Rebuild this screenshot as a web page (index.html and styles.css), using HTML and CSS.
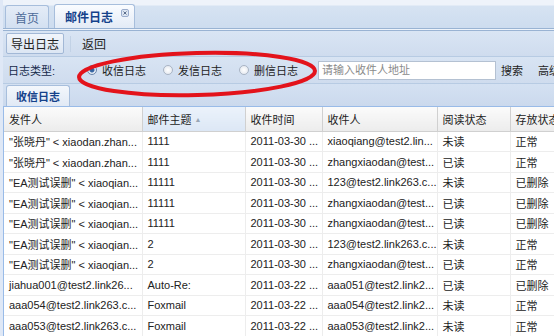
FILE: index.html
```html
<!DOCTYPE html>
<html lang="zh-CN">
<head>
  <meta charset="UTF-8">
  <title>邮件日志</title>
  <link rel="stylesheet" href="styles.css">
</head>
<body>
  <div class="page">
    <!-- Main tabs -->
    <div class="tabbar">
      <div class="tab">首页</div>
      <div class="tab active">邮件日志
        <span class="tab-close">
          <svg width="8" height="8" viewBox="0 0 8 8"><rect x="0.5" y="0.5" width="7" height="7" rx="1.5" fill="#dde6f2" stroke="#9aaccc"/><path d="M2.5 2.5l3 3M5.5 2.5l-3 3" stroke="#5d6f8c" stroke-width="1"/></svg>
        </span>
      </div>
    </div>

    <!-- Toolbar -->
    <div class="toolbar">
      <button class="tool-btn pressed">导出日志</button>
      <span class="tool-sep"></span>
      <button class="tool-btn">返回</button>
    </div>

    <!-- Filter row -->
    <div class="filter">
      <span class="filter-label">日志类型:</span>
      <label class="radio checked"><span class="radio-dot"></span>收信日志</label>
      <label class="radio"><span class="radio-dot"></span>发信日志</label>
      <label class="radio"><span class="radio-dot"></span>删信日志</label>
      <input class="search-input" type="text" placeholder="请输入收件人地址">
      <span class="filter-link">搜索</span>
      <span class="filter-link">高级</span>
      <svg class="mark" width="250" height="54" viewBox="0 0 250 54">
        <ellipse cx="125" cy="27" rx="118" ry="21" fill="none" stroke="#e3131b" stroke-width="4" transform="rotate(-1.5 125 27)"/>
      </svg>
    </div>

    <!-- Sub tabs -->
    <div class="subtabs">
      <div class="subtab">收信日志</div>
    </div>

    <!-- Grid -->
    <div class="grid-wrap">
      <table class="grid">
        <colgroup>
          <col style="width:138px">
          <col style="width:103px">
          <col style="width:77px">
          <col style="width:115px">
          <col style="width:73px">
          <col style="width:80px">
        </colgroup>
        <thead>
          <tr>
            <th>发件人</th>
            <th class="sorted">邮件主题 <span class="sort-arrow">▲</span></th>
            <th>收件时间</th>
            <th>收件人</th>
            <th>阅读状态</th>
            <th>存放状态</th>
          </tr>
        </thead>
        <tbody id="rows"></tbody>
      </table>
    </div>
  </div>

  <script>
    const rows = [
      ['"张晓丹" < xiaodan.zhan...', '1111', '2011-03-30 ...', 'xiaoqiang@test2.lin...', '未读', '正常'],
      ['"张晓丹" < xiaodan.zhan...', '1111', '2011-03-30 ...', 'zhangxiaodan@test...', '已读', '正常'],
      ['"EA测试误删" < xiaoqian...', '11111', '2011-03-30 ...', '123@test2.link263.c...', '未读', '已删除'],
      ['"EA测试误删" < xiaoqian...', '11111', '2011-03-30 ...', 'zhangxiaodan@test...', '已读', '已删除'],
      ['"EA测试误删" < xiaoqian...', '11111', '2011-03-30 ...', 'zhangxiaodan@test...', '已读', '已删除'],
      ['"EA测试误删" < xiaoqian...', '2', '2011-03-30 ...', '123@test2.link263.c...', '未读', '正常'],
      ['"EA测试误删" < xiaoqian...', '2', '2011-03-30 ...', 'zhangxiaodan@test...', '已读', '正常'],
      ['jiahua001@test2.link26...', 'Auto-Re:', '2011-03-22 ...', 'aaa051@test2.link2...', '已读', '已删除'],
      ['aaa054@test2.link263.c...', 'Foxmail', '2011-03-22 ...', 'aaa054@test2.link2...', '未读', '正常'],
      ['aaa053@test2.link263.c...', 'Foxmail', '2011-03-22 ...', 'aaa053@test2.link2...', '未读', '正常']
    ];

    const body = document.getElementById('rows');
    rows.forEach(r => {
      const tr = document.createElement('tr');
      r.forEach(v => {
        const td = document.createElement('td');
        td.textContent = v;
        tr.appendChild(td);
      });
      body.appendChild(tr);
    });
  </script>
</body>
</html>
```

FILE: styles.css
```css
* {
  margin: 0;
  padding: 0;
  box-sizing: border-box;
}

body {
  width: 554px;
  height: 336px;
  overflow: hidden;
  background: #dfe8f6;
  font-family: "Liberation Sans", "Noto Sans CJK SC", sans-serif;
  font-size: 11px;
  color: #222;
}

.page {
  padding-left: 3px;
  background: #dfe8f6;
}

/* main tabs */
.tabbar {
  height: 31px;
  padding-top: 5px;
  padding-left: 2px;
  display: flex;
  align-items: flex-end;
  gap: 5px;
  background: linear-gradient(#eef3fa 0, #eef3fa 5px, #d6e3f2 6px, #cddcef 100%);
  border-bottom: 3px double #99b3d3;
}

.tab {
  height: 23px;
  padding: 0 9px;
  display: flex;
  align-items: center;
  color: #4d6b99;
  font-size: 12px;
  background: linear-gradient(#e4ecf7, #d3e0f1);
  border: 1px solid #a7bedc;
  border-bottom: none;
  border-radius: 3px 3px 0 0;
}

.tab.active {
  height: 24px;
  padding: 0 5px 0 10px;
  font-weight: bold;
  color: #15428b;
  background: linear-gradient(#fafcff, #e3ebf6);
}

.tab-close {
  margin-left: 8px;
  margin-top: -8px;
  display: flex;
}

/* toolbar */
.toolbar {
  height: 26px;
  padding: 2px 3px;
  display: flex;
  align-items: center;
  gap: 6px;
  background: linear-gradient(#d9e5f4, #cfdcee);
  border-bottom: 1px solid #b7cbe3;
}

.tool-btn {
  height: 21px;
  padding: 0 4px;
  border: 1px solid transparent;
  border-radius: 2px;
  background: none;
  font-family: "Liberation Sans", "Noto Sans CJK SC", sans-serif;
  font-size: 12px;
  color: #222;
}

.tool-btn.pressed {
  border-color: #a2b8d6;
  background: linear-gradient(#f1f5fb, #dce6f3);
}

.tool-sep {
  width: 1px;
  height: 16px;
  background: #c2d2e6;
}

/* filter row */
.filter {
  position: relative;
  height: 27px;
  padding-left: 5px;
  display: flex;
  align-items: center;
  background: linear-gradient(#d8e4f3, #cfdcee);
  border-bottom: 1px solid #b7cbe3;
}

.filter > * {
  flex-shrink: 0;
}

.filter-label {
  width: 79px;
  color: #15294a;
}

.radio {
  display: flex;
  align-items: center;
  width: 76px;
  color: #222;
}

.radio-dot {
  width: 10px;
  height: 10px;
  margin-right: 5px;
  border-radius: 50%;
  border: 1px solid #a9b4c4;
  background: radial-gradient(#ffffff, #dfe4ec);
}

.radio.checked .radio-dot {
  border-color: #6c86ab;
  background: radial-gradient(#2c5b9a 0, #3c6aa6 2px, #e8eef6 3px, #d4dde9 100%);
}

.search-input {
  width: 178px;
  height: 19px;
  margin-left: 3px;
  padding: 0 3px;
  border: 1px solid #b4c1d2;
  background: #fff;
  font-family: "Liberation Sans", "Noto Sans CJK SC", sans-serif;
  font-size: 11px;
}

.search-input::placeholder {
  color: #8a8a8a;
}

.filter-link {
  margin-left: 5px;
  width: 32px;
  color: #222;
  white-space: nowrap;
}

.mark {
  position: absolute;
  left: 69px;
  top: -10px;
}

/* sub tabs */
.subtabs {
  height: 23px;
  padding-left: 3px;
  display: flex;
  align-items: flex-end;
  background: linear-gradient(#d4e1f2, #cbd9ed);
  border-bottom: 1px solid #99bbe8;
}

.subtab {
  height: 21px;
  padding: 0 9px;
  display: flex;
  align-items: center;
  font-weight: bold;
  color: #15428b;
  background: linear-gradient(#f3f7fc, #e1e9f5);
  border: 1px solid #a7bedc;
  border-bottom: none;
  border-radius: 3px 3px 0 0;
}

/* grid */
.grid-wrap {
  overflow: hidden;
  border-left: 1px solid #99bbe8;
  background: #fff;
}

.grid {
  table-layout: fixed;
  width: 586px;
  border-collapse: collapse;
}

.grid th {
  height: 24px;
  padding: 0 5px;
  text-align: left;
  font-weight: normal;
  color: #222;
  white-space: nowrap;
  overflow: hidden;
  background: linear-gradient(#fbfbfb, #ececec);
  border-right: 1px solid #d0d0d0;
  border-bottom: 1px solid #d0d0d0;
}

.grid th.sorted {
  background: linear-gradient(#ebf2fb, #dce7f5);
}

.sort-arrow {
  font-size: 7px;
  color: #9aa6b5;
  vertical-align: 2px;
}

.grid td {
  height: 20.5px;
  padding: 0 5px;
  white-space: nowrap;
  overflow: hidden;
  text-overflow: clip;
  color: #222;
  border-right: 1px solid #ededed;
  border-bottom: 1px solid #ededed;
}
```
